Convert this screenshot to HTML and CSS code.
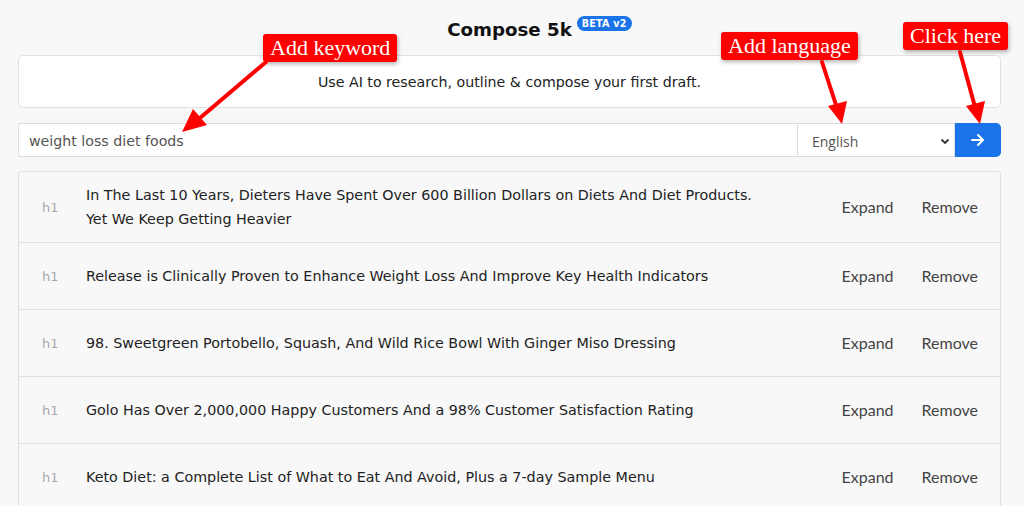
FILE: index.html
```html
<!DOCTYPE html>
<html>
<head>
<meta charset="utf-8">
<link rel="stylesheet" href="styles.css">
</head>
<body>
<div class="page">
  <h1 class="title"><span class="title-text">Compose 5k<span class="badge">BETA v2</span></span></h1>
  <div class="intro">Use AI to research, outline &amp; compose your first draft.</div>
  <div class="form">
    <div class="keyword">weight loss diet foods</div>
    <div class="lang">English <svg class="chev" width="10" height="7" viewBox="0 0 10 7"><path d="M1.5 1.5 L5 5 L8.5 1.5" fill="none" stroke="#333" stroke-width="1.8"/></svg></div>
    <div class="go"><svg width="16" height="14" viewBox="0 0 16 14"><path d="M2 7 H13 M8 2 L13 7 L8 12" fill="none" stroke="#fff" stroke-width="2" stroke-linecap="round" stroke-linejoin="round"/></svg></div>
  </div>
  <div class="list">
    <div class="row"><span class="tag">h1</span><span class="text">In The Last 10 Years, Dieters Have Spent Over 600 Billion Dollars on Diets And Diet Products. Yet We Keep Getting Heavier</span><span class="act">Expand</span><span class="act">Remove</span></div>
    <div class="row"><span class="tag">h1</span><span class="text">Release is Clinically Proven to Enhance Weight Loss And Improve Key Health Indicators</span><span class="act">Expand</span><span class="act">Remove</span></div>
    <div class="row"><span class="tag">h1</span><span class="text">98. Sweetgreen Portobello, Squash, And Wild Rice Bowl With Ginger Miso Dressing</span><span class="act">Expand</span><span class="act">Remove</span></div>
    <div class="row"><span class="tag">h1</span><span class="text">Golo Has Over 2,000,000 Happy Customers And a 98% Customer Satisfaction Rating</span><span class="act">Expand</span><span class="act">Remove</span></div>
    <div class="row"><span class="tag">h1</span><span class="text">Keto Diet: a Complete List of What to Eat And Avoid, Plus a 7-day Sample Menu</span><span class="act">Expand</span><span class="act">Remove</span></div>
  </div>
</div>
<div class="note note-kw">Add keyword</div>
<div class="note note-lang">Add language</div>
<div class="note note-click">Click here</div>
<svg class="arrows" width="1024" height="506" viewBox="0 0 1024 506">
  <g stroke="#f00" stroke-width="4" fill="none" stroke-linecap="round">
    <line x1="266" y1="62" x2="200" y2="118"/>
    <line x1="822" y1="62" x2="837" y2="108"/>
    <line x1="960" y1="52" x2="975" y2="107"/>
  </g>
  <g fill="#f00">
    <polygon points="182,132 193,109 207,125"/>
    <polygon points="842,124 828,106 847,101"/>
    <polygon points="980,124 966,106 985,101"/>
  </g>
</svg>
</body>
</html>
```
FILE: styles.css
```css
html, body { margin: 0; padding: 0; }
body {
  background: #f8f8f9;
  font-family: "DejaVu Sans", Verdana, sans-serif;
  color: #222;
  width: 1024px;
  height: 506px;
  overflow: hidden;
  position: relative;
}
.page { padding: 0 23px 0 18px; }
.title {
  margin: 0;
  height: 55px;
  display: flex;
  align-items: center;
  justify-content: center;
  font-size: 18.2px;
  font-weight: bold;
  color: #111;
  padding-top: 3px;
  box-sizing: border-box;
}
.title-text { position: relative; }
.badge {
  position: absolute;
  left: calc(100% + 5px);
  top: -3px;
  background: #1a73e8;
  color: #fff;
  font-size: 9.6px;
  font-weight: bold;
  padding: 2px 5px 1px;
  border-radius: 8px;
  letter-spacing: 0.2px;
  white-space: nowrap;
  line-height: 12px;
}
.intro {
  background: #fff;
  border: 1px solid #e2e2e4;
  border-radius: 5px;
  height: 51px;
  display: flex;
  align-items: center;
  justify-content: center;
  font-size: 14.2px;
  color: #222;
}
.form {
  margin-top: 15px;
  display: flex;
  height: 34px;
}
.keyword {
  flex: 1;
  background: #fff;
  border: 1px solid #dcdcde;
  border-right: none;
  border-radius: 3px 0 0 3px;
  display: flex;
  align-items: center;
  padding: 2px 0 0 10px;
  font-size: 14.2px;
  color: #555;
}
.lang {
  width: 158px;
  box-sizing: border-box;
  background: #fff;
  border: 1px solid #dcdcde;
  display: flex;
  align-items: center;
  justify-content: space-between;
  padding: 2px 4px 0 14px;
  font-family: "Open Sans", sans-serif;
  font-size: 14px;
  color: #555;
}
.go {
  width: 46px;
  background: #1a73e8;
  border-radius: 0 5px 5px 0;
  display: flex;
  align-items: center;
  justify-content: center;
}
.list {
  margin-top: 14px;
  border: 1px solid #e0e0e2;
  border-radius: 3px;
  background: #f8f8f9;
}
.row {
  display: flex;
  align-items: center;
  padding: 11px 0;
  border-bottom: 1px solid #e0e0e2;
  min-height: 44px;
}
.tag {
  width: 67px;
  padding-left: 23px;
  box-sizing: border-box;
  font-size: 13px;
  color: #aaa;
  flex: none;
}
.text {
  flex: 1;
  font-size: 14.3px;
  line-height: 24px;
  color: #222;
  padding-right: 70px;
}
.act {
  font-family: Lato, sans-serif;
  font-size: 16px;
  color: #444;
  flex: none;
  padding: 0 28px 0 0;
  line-height: 44px;
}
.act + .act { padding-right: 22px; }
.note {
  position: absolute;
  background: #f00;
  color: #fff;
  font-family: "Liberation Serif", serif;
  font-size: 22px;
  line-height: 28px;
  padding: 0 7px;
  border-radius: 3px;
  box-shadow: 1px 2px 4px rgba(0,0,0,0.3);
}
.note-kw { left: 263px; top: 34px; }
.note-lang { left: 721px; top: 32px; }
.note-click { left: 903px; top: 22px; }
.arrows { position: absolute; left: 0; top: 0; pointer-events: none; }
```
